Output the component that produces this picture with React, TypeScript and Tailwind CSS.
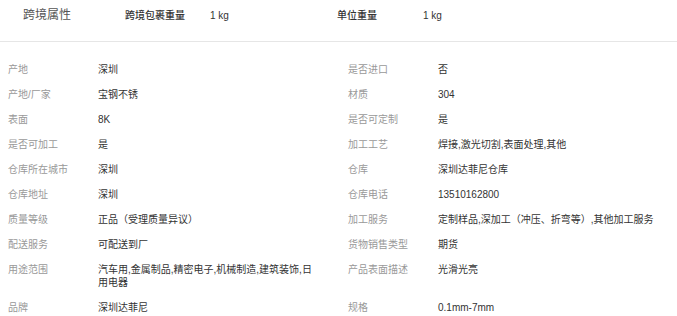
import React from "react";

const rows: [string, string][] = [
  ["产地", "深圳"],
  ["是否进口", "否"],
  ["产地/厂家", "宝钢不锈"],
  ["材质", "304"],
  ["表面", "8K"],
  ["是否可定制", "是"],
  ["是否可加工", "是"],
  ["加工工艺", "焊接,激光切割,表面处理,其他"],
  ["仓库所在城市", "深圳"],
  ["仓库", "深圳达菲尼仓库"],
  ["仓库地址", "深圳"],
  ["仓库电话", "13510162800"],
  ["质量等级", "正品（受理质量异议）"],
  ["加工服务", "定制样品,深加工（冲压、折弯等）,其他加工服务"],
  ["配送服务", "可配送到厂"],
  ["货物销售类型", "期货"],
  ["用途范围", "汽车用,金属制品,精密电子,机械制造,建筑装饰,日用电器"],
  ["产品表面描述", "光滑光亮"],
  ["品牌", "深圳达菲尼"],
  ["规格", "0.1mm-7mm"],
];

export default function App() {
  return (
    <div
      className="w-[677px] h-[316px] bg-white overflow-hidden"
      style={{ fontFamily: '"Liberation Sans", "Noto Sans CJK SC", sans-serif' }}
    >
      <div className="h-[41px] flex items-start pt-[8px] leading-[15px]">
        <div className="w-[125px] pl-[23px] text-[12px] text-[#555]">跨境属性</div>
        <div className="w-[85px] text-[10px] text-[#333] font-medium">跨境包裹重量</div>
        <div className="w-[127px] text-[10px] text-[#333]">1 kg</div>
        <div className="w-[86px] text-[10px] text-[#333] font-medium">单位重量</div>
        <div className="text-[10px] text-[#333]">1 kg</div>
      </div>
      <div className="h-px bg-[#e6e6e6]" />
      <div className="grid grid-cols-[340px_1fr] pt-[14.5px] text-[10px] leading-[13px]">
        {rows.map(([k, v], i) => (
          <div key={i} className="flex pl-[8px] py-[6px]">
            <div className="w-[90px] shrink-0 text-[#999]">{k}</div>
            <div className="w-[222px] text-[#333]">{v}</div>
          </div>
        ))}
      </div>
    </div>
  );
}
